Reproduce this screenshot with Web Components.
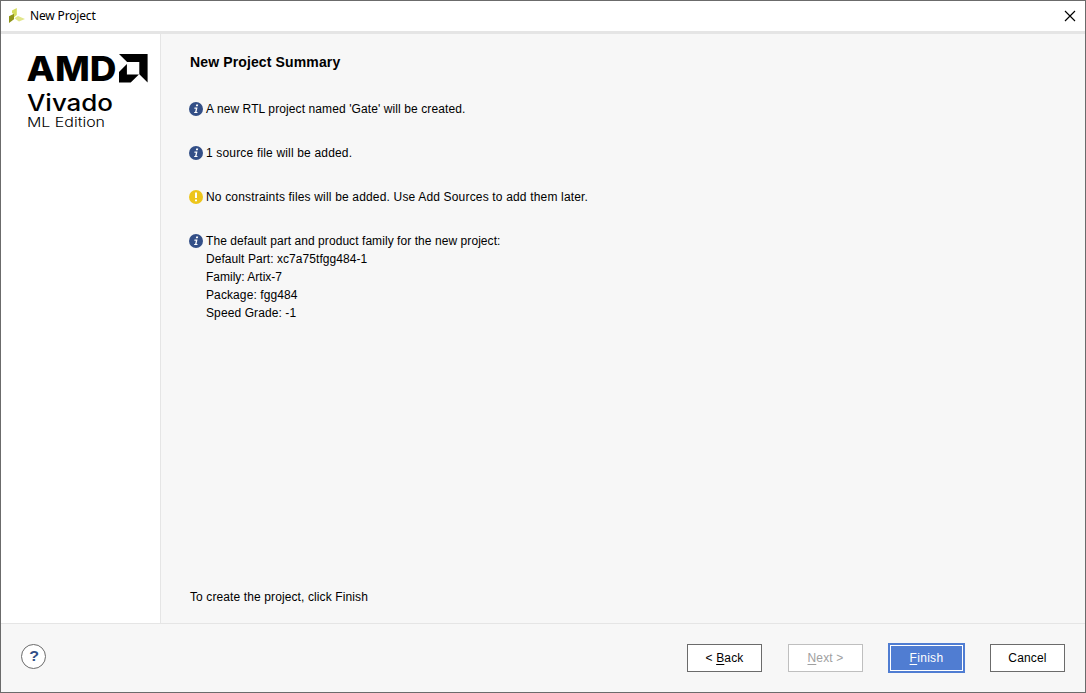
<!DOCTYPE html>
<html lang="en">
<head>
<meta charset="utf-8">
<title>New Project</title>
<style>
html,body{margin:0;height:100%;overflow:hidden}
body{font:12px/18px "Liberation Sans",Arial,sans-serif;color:#000}
</style>
</head>
<body>
<wizard-window>
  <title-bar slot="title">New Project</title-bar>
  <brand-panel slot="side"></brand-panel>
  <summary-page slot="page"></summary-page>
  <wizard-footer slot="footer"></wizard-footer>
</wizard-window>
<script>
const define = (name, html) => customElements.define(name, class extends HTMLElement {
  constructor() {
    super();
    const t = document.createElement('template');
    t.innerHTML = html;
    this.attachShadow({mode: 'open'}).append(t.content.cloneNode(true));
  }
});

define('wizard-window', `<style>
:host{display:grid;box-sizing:border-box;width:1086px;height:693px;border:1px solid #6b6b6b;background:#f7f7f7;
grid-template:30px 3px 589px 1fr / 159px 1px 1fr}
.top{grid-column:1/-1}.rule{grid-column:1/-1;background:#e5e5e5}
.line{background:#e5e5e5}.foot{grid-column:1/-1;border-top:1px solid #e5e5e5}
.side{background:#fff}
</style><div class="top"><slot name="title"></slot></div><div class="rule"></div>
<div class="side"><slot name="side"></slot></div><div class="line"></div><div><slot name="page"></slot></div>
<div class="foot"><slot name="footer"></slot></div>`);

define('title-bar', `<style>
:host{display:flex;height:30px;align-items:center;background:#fff;font:12px/18px "Noto Sans",sans-serif}
.name{margin-left:5px;flex:1;letter-spacing:-.16px}svg{display:block}
.logo{margin-left:7px}.x{margin-right:9px}
</style><svg class="logo" width="17" height="17" viewBox="0 0 17 17">
<path d="M4 2.4 8.8 0v7L5.7 9.4V6L4 5z" fill="#d6dc5e"/><path d="M1 8.3 6 5.8v5.4L1 15z" fill="#8f9419"/><path d="M6.3 10.2 10 8 17 11.1 11 13.5z" fill="#e2e68c"/></svg>
<span class="name"><slot></slot></span>
<svg class="x" width="12" height="12" viewBox="0 0 12 12"><path d="M1 1 11 11M11 1 1 11" stroke="#000" stroke-width="1.15"/></svg>`);

define('brand-panel', `<style>:host{display:block}svg{display:block}</style>
<svg width="159" height="110" viewBox="1 34 159 110">
<text x="26.5" y="81" font-family="Inter" font-weight="800" font-size="34.5" textLength="90" lengthAdjust="spacingAndGlyphs">AMD</text>
<path d="M119 54h28.6v28.6l-8.3-8.3V62.1h-12.2zM126.9 64v10.4h12l-8.2 8.2H119V71.9z"/>
<text x="27" y="110.5" font-family="Inter" font-weight="500" font-size="22.8" textLength="86" lengthAdjust="spacingAndGlyphs">Vivado</text>
<text x="27" y="127" font-family="Inter" font-weight="300" font-size="13.5" textLength="78" lengthAdjust="spacingAndGlyphs">ML Edition</text>
</svg>`);

define('status-note', `<style>
:host{display:flex;gap:3px;margin-bottom:26px}
svg{flex:none;margin-top:2px;width:14px;height:14px}.warn,:host([kind=warn]) .info{display:none}:host([kind=warn]) .warn{display:block}
</style>
<svg class="info" viewBox="0 0 14 14"><circle cx="7" cy="7" r="7" fill="#334f87"/><path d="M7.2 2.5h2l-.4 1.8h-2zM5.5 5.6h3l-1 4.5h1.1l-.2 1H5.1l.2-1h.8l.8-3.4H5.3z" fill="#fff"/></svg>
<svg class="warn" viewBox="0 0 14 14"><circle cx="7" cy="7" r="7" fill="#edc51b"/><path d="M6 2.6h2V8H6zM6 9.4h2v1.9H6z" fill="#fff"/></svg>
<div><slot></slot></div>`);

define('summary-page', `<style>
:host{display:flex;flex-direction:column;box-sizing:border-box;height:589px;padding:19px 0 17px 28px;letter-spacing:.17px}
h1{font-size:14px;line-height:18px;margin:0 0 29px 1px;letter-spacing:.13px}.end{margin:auto 0 0 1px;letter-spacing:.11px}
.a{letter-spacing:.1px}.b{letter-spacing:.065px}.c{letter-spacing:0}
</style><h1>New Project Summary</h1>
<status-note class="a">A new RTL project named 'Gate' will be created.</status-note>
<status-note>1 source file will be added.</status-note>
<status-note kind="warn">No constraints files will be added. Use Add Sources to add them later.</status-note>
<status-note class="a"><div class="b">The default part and product family for the new project:</div><div class="b">Default Part: xc7a75tfgg484-1</div><div class="c">Family: Artix-7</div><div>Package: fgg484</div><div>Speed Grade: -1</div></status-note>
<div class="end">To create the project, click Finish</div>`);

define('push-button', `<style>
:host{display:flex;box-sizing:border-box;width:75px;height:28px;border:1px solid #6b6b6b;background:#fff;align-items:center;justify-content:center;letter-spacing:.17px;white-space:pre}
:host([off]){border-color:#bfbfbf;color:#a0a0a0}
:host([primary]){background:#507dd2;border-color:#fff;color:#fff;outline:2px solid #507dd2;width:73px;height:26px;margin:0 1px;letter-spacing:.3px}
</style><span><slot></slot></span>`);

define('wizard-footer', `<style>
:host{display:flex;align-items:center;height:68px;box-sizing:border-box;padding:0 20px}
svg{margin-top:-3px}.btns{display:flex;align-items:center;gap:26px;margin-left:auto}
u{text-underline-offset:2px;text-decoration-thickness:1px;text-decoration-skip-ink:none}
</style><svg width="26" height="26" viewBox="0 0 26 26"><circle cx="12.5" cy="12.5" r="12" fill="#fff" stroke="#6b6b6b"/><text x="8.2" y="17.2" textLength="9.8" lengthAdjust="spacingAndGlyphs" font-family="Liberation Sans" font-weight="700" font-size="14" fill="#334f87">?</text></svg>
<div class="btns"><push-button><span>&lt; <u>B</u>ack</span></push-button><push-button off><span><u>N</u>ext &gt;</span></push-button><push-button primary><span><u>F</u>inish</span></push-button><push-button>Cancel</push-button></div>`);
</script>
</body>
</html>
